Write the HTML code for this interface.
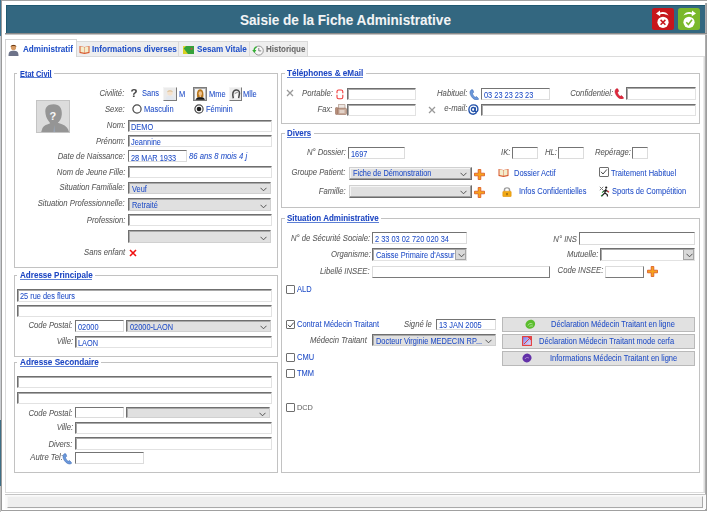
<!DOCTYPE html>
<html><head><meta charset="utf-8"><style>
html,body{margin:0;padding:0;}
body{filter:blur(0.3px);width:709px;height:512px;position:relative;overflow:hidden;background:#fff;font-family:"Liberation Sans",sans-serif;}
body>div,body>svg{position:absolute;}
.t{white-space:nowrap;-webkit-text-stroke:0.05px currentColor;}
.inp{box-sizing:border-box;border:1px solid;border-color:#6f6f6f #e2e2e2 #e2e2e2 #6f6f6f;box-shadow:inset 1px 1px 0 #a9a9a9;}
.inth{box-sizing:border-box;border:1px solid;border-color:#747474 #dcdcdc #dcdcdc #747474;}
.inrev{box-sizing:border-box;border:1px solid;border-color:#dcdcdc #7a7a7a #7a7a7a #dcdcdc;}
.sel{box-sizing:border-box;background:#e0e0e0;border:1px solid;border-color:#6f6f6f #d0d0d0 #d0d0d0 #6f6f6f;box-shadow:inset 1px 1px 0 #a9a9a9;}
.selr{box-sizing:border-box;background:#e0e0e0;border:1px solid;border-color:#d0d0d0 #6c6c6c #6c6c6c #d0d0d0;box-shadow:inset -1px -1px 0 #a0a0a0, inset 1px 1px 0 #f4f4f4;}
.ddb{box-sizing:border-box;background:#d9d9d9;border:1px solid #a5a5a5;}
.fs{border:1px solid #c2c2c2;}
.cb{width:10px;height:10px;box-sizing:border-box;border:1px solid #6e6e6e;border-radius:1px;background:#fff;}
</style></head><body>
<div style="left:0px;top:0px;width:1px;height:36px;background:#3d7390"></div>
<div style="left:0px;top:36px;width:1px;height:384px;background:#c9ccd0"></div>
<div style="left:0px;top:420px;width:1px;height:66px;background:#3f6f86"></div>
<div style="left:0px;top:486px;width:1px;height:26px;background:#bfbfbf"></div>
<div style="left:1px;top:0px;width:706px;height:1px;background:#a3a3a3"></div>
<div style="left:1px;top:0px;width:1px;height:511px;background:#9a9a9a"></div>
<div style="left:705px;top:3px;width:2px;height:508px;background:linear-gradient(90deg,#b4b4b4,#969696)"></div>
<div style="left:1px;top:510px;width:706px;height:1px;background:#a0a0a0"></div>
<div style="left:6px;top:5px;width:699px;height:29px;background:#336780;border-top:1px solid #1f5870;border-left:1px solid #1f5870;box-sizing:border-box"></div>
<div style="left:5px;top:33px;width:702px;height:1px;background:#8a8a8a"></div>
<div style="left:5px;top:34px;width:702px;height:1px;background:#c4c4c4"></div>
<div class="t" style="top:13.30px;font-size:14.42px;line-height:14.42px;color:#f2f4f5;transform:scaleX(0.9434);font-weight:bold;left:239.50px;transform-origin:left center;">Saisie de la Fiche Administrative</div>
<svg style="left:652px;top:8.4px" width="22" height="22" viewBox="0 0 22 22"><rect x="0" y="0" width="22" height="22" rx="2.5" fill="#c7161c"/>
<path d="M16.5 7.5 C15 4.2 11 3.3 8 4.6 L8 2.6 L4 5.6 L8.2 8.2 L8.1 6.4 C10.5 5.6 13.3 6 16.5 7.5 Z" fill="#fff"/>
<circle cx="11" cy="14.3" r="5.6" fill="#fff"/>
<path d="M8.6 11.9 L13.4 16.7 M13.4 11.9 L8.6 16.7" stroke="#c7161c" stroke-width="1.5"/></svg>
<svg style="left:678px;top:8.4px" width="22" height="22" viewBox="0 0 22 22"><rect x="0" y="0" width="22" height="22" rx="2.5" fill="#7ab82a"/>
<path d="M5.5 7.5 C7 4.2 11 3.3 14 4.6 L14 2.6 L18 5.6 L13.8 8.2 L13.9 6.4 C11.5 5.6 8.7 6 5.5 7.5 Z" fill="#fff"/>
<circle cx="11" cy="14.3" r="5.6" fill="#fff"/>
<path d="M8.3 14.2 L10.4 16.5 L14 11.8" fill="none" stroke="#7ab82a" stroke-width="1.5"/></svg>
<div style="left:5px;top:56px;width:700px;height:437px;border:1px solid #dcdcdc;box-shadow:inset -1px 0 0 #ececec;box-sizing:border-box;background:#fff"></div>
<div style="left:76px;top:41px;width:103px;height:16px;background:#eeeeee;border:1px solid #dadada;box-sizing:border-box"></div>
<div style="left:178px;top:41px;width:72px;height:16px;background:#eeeeee;border:1px solid #dadada;box-sizing:border-box"></div>
<div style="left:249px;top:41px;width:59px;height:16px;background:#eeeeee;border:1px solid #dadada;box-sizing:border-box"></div>
<div style="left:5px;top:39px;width:72px;height:18px;background:#fff;border:1px solid #d4d4d4;border-bottom:none;box-sizing:border-box"></div>
<svg style="left:8px;top:44px" width="11" height="12" viewBox="0 0 11 12"><ellipse cx="5.5" cy="3.5" rx="2.6" ry="2.8" fill="#d69a63"/>
<path d="M2.6 3 C2.6 0.4 8.4 0.4 8.4 3 C7.5 2 4 1.6 2.6 3Z" fill="#6b3a12"/>
<path d="M0.5 12 C0.5 7.5 2 6.8 5.5 6.8 C9 6.8 10.5 7.5 10.5 12 Z" fill="#6d7389"/></svg>
<div class="t" style="top:45.30px;font-size:8.91px;line-height:8.91px;color:#2150c8;transform:scaleX(0.9091);font-weight:bold;left:22.50px;transform-origin:left center;">Administratif</div>
<svg style="left:79px;top:45px" width="11" height="9" viewBox="0 0 11 9"><path d="M0.5 1 L5.5 2 L10.5 1 L10.5 8 L5.5 9 L0.5 8 Z" fill="#d7572a"/>
<path d="M1.5 1.5 L5.3 2.3 L5.3 7.8 L1.5 7 Z M5.7 2.3 L9.5 1.5 L9.5 7 L5.7 7.8 Z" fill="#f4edcc"/></svg>
<div class="t" style="top:45.30px;font-size:8.97px;line-height:8.97px;color:#2150c8;transform:scaleX(0.9091);font-weight:bold;left:92.20px;transform-origin:left center;">Informations diverses</div>
<svg style="left:183px;top:46px" width="11" height="8" viewBox="0 0 11 8"><rect x="0" y="0" width="11" height="8" fill="#36a23a"/><path d="M0 1.5 L5 8 L0 8Z" fill="#d9d020"/><path d="M0 0 L3 0 L0 3Z" fill="#e2d83a"/><circle cx="8.5" cy="2.8" r="1" fill="#c0504a"/></svg>
<div class="t" style="top:45.30px;font-size:8.91px;line-height:8.91px;color:#2150c8;transform:scaleX(0.9091);font-weight:bold;left:196.80px;transform-origin:left center;">Sesam Vitale</div>
<svg style="left:252px;top:45px" width="12" height="11" viewBox="0 0 12 11"><circle cx="6.8" cy="5.6" r="4.5" fill="#f6f6f6" stroke="#8a8a8a" stroke-width="0.9"/>
<path d="M6.8 3 L6.8 5.9 L9.2 5.9" fill="none" stroke="#666" stroke-width="0.8"/>
<path d="M4.5 1.2 C2.5 1.8 1.5 3.2 1.5 5 L0.2 5 L2.3 8 L4.4 5 L3 5 C3 3.8 3.6 3 4.8 2.6Z" fill="#35b035"/></svg>
<div class="t" style="top:45.30px;font-size:8.75px;line-height:8.75px;color:#6a6a6a;transform:scaleX(0.9091);font-weight:bold;left:265.60px;transform-origin:left center;">Historique</div>
<div class="fs" style="left:14px;top:73px;width:262px;height:193px"></div>
<div style="left:17.3px;top:72px;width:37px;height:3px;background:#fff"></div>
<div class="t" style="top:71.00px;font-size:8.14px;line-height:8.14px;color:#1d46c2;transform:scaleX(0.9091);font-weight:bold;left:19.80px;transform-origin:left center;">Etat Civil</div>
<div style="left:19.8px;top:77px;width:32px;height:1px;background:#5d80d6"></div>
<div style="left:36px;top:100px;width:34px;height:33px;background:#dcdcdc;border:1px solid #c4c4c4;box-sizing:border-box"></div>
<svg style="left:36px;top:100px" width="34" height="33" viewBox="0 0 34 33"><path d="M17.5 4.2 C12 4.2 9.2 7 9.3 11.5 C9.4 15 10.6 18.5 12.6 21 L14.2 23.3 C11 24.5 8 25.5 6.5 28 L5.2 32 L33 32 C32 28 30 25.5 26 24.2 L21.8 22.8 C23.5 21.5 25.5 19 25.8 14.5 C26.2 8 23.5 4.2 17.5 4.2Z" fill="#959595"/>
<path d="M18.3 25 L17.4 32 L19.2 32 Z" fill="#98a4b4"/>
<text x="16.8" y="19.6" font-family="Liberation Sans" font-weight="bold" font-size="11" fill="#f8f8f8" text-anchor="middle">?</text></svg>
<div class="t" style="top:89.10px;font-size:8.47px;line-height:8.47px;color:#575757;transform:scaleX(0.9091);font-style:italic;right:584.40px;text-align:right;transform-origin:right center;">Civilité:</div>
<div class="t" style="top:88.20px;font-size:11.50px;line-height:11.50px;color:#454545;transform:scaleX(1.0000);font-weight:bold;left:130.60px;transform-origin:left center;">?</div>
<div class="t" style="top:90.30px;font-size:8.25px;line-height:8.25px;color:#1f4cc6;transform:scaleX(0.9091);left:141.50px;transform-origin:left center;">Sans</div>
<div style="left:163px;top:87px;width:14px;height:13.5px;background:#ebebeb;border:1px solid;border-color:#f4f4f4 #7a7a7a #7a7a7a #f4f4f4;box-sizing:border-box"></div>
<svg style="left:164px;top:88px" width="12" height="12" viewBox="0 0 12 12"><path d="M1.5 12 C1.8 8.6 3.5 7.8 6 7.8 C8.5 7.8 10.2 8.6 10.5 12Z" fill="#e3e8ef"/><circle cx="6" cy="4.8" r="2.7" fill="#f6e2cc"/><path d="M3.2 4.5 C3 1.5 9 1.5 8.8 4.5 C8 3.3 4 3.3 3.2 4.5Z" fill="#d9bf96"/></svg>
<div class="t" style="top:90.50px;font-size:8.25px;line-height:8.25px;color:#1f4cc6;transform:scaleX(0.9091);left:178.50px;transform-origin:left center;">M</div>
<div style="left:193px;top:87px;width:14px;height:13.5px;background:#f4f4f4;border:1px solid #7c7c7c;box-shadow:inset 1px 1px 0 #a8a8a8, inset -1px -1px 0 #b8b8b8;box-sizing:border-box"></div>
<svg style="left:194px;top:88px" width="12" height="12" viewBox="0 0 12 12"><path d="M3.2 9.5 C2.6 6 2.8 1.3 6.2 1.3 C9.4 1.3 9.8 6 9.2 9.5Z" fill="#b8781f"/><ellipse cx="6.3" cy="5.6" rx="1.7" ry="2.4" fill="#f2c590"/><path d="M5.6 7.5 L7 7.5 L7 9.5 L5.6 9.5Z" fill="#f2c590"/><path d="M1.8 11.8 C2 9.8 3.8 9.2 6.3 9.2 C8.8 9.2 10.6 9.8 10.8 11.8Z" fill="#161616"/></svg>
<div class="t" style="top:90.50px;font-size:8.25px;line-height:8.25px;color:#1f4cc6;transform:scaleX(0.9091);left:208.50px;transform-origin:left center;">Mme</div>
<div style="left:228.5px;top:87px;width:13.5px;height:13.5px;background:#ececec;border:1px solid;border-color:#f4f4f4 #7a7a7a #7a7a7a #f4f4f4;box-sizing:border-box"></div>
<svg style="left:229.5px;top:88px" width="12" height="12" viewBox="0 0 12 12"><path d="M3.3 10.2 C2.2 6.5 2.6 2.2 6.2 2 C9.3 1.9 10 4.5 9.2 7.2 L8.6 10.2" fill="none" stroke="#4a4a4a" stroke-width="1.5"/><path d="M4.6 10.2 L4.8 5.5 L7.8 4.2 L7.6 10.2Z" fill="#fafafa"/><path d="M4.8 5.5 L7.8 4.2" stroke="#6a6a6a" stroke-width="0.8"/></svg>
<div class="t" style="top:90.50px;font-size:8.25px;line-height:8.25px;color:#1f4cc6;transform:scaleX(0.9091);left:243.00px;transform-origin:left center;">Mlle</div>
<div class="t" style="top:104.60px;font-size:8.47px;line-height:8.47px;color:#575757;transform:scaleX(0.9091);font-style:italic;right:584.40px;text-align:right;transform-origin:right center;">Sexe:</div>
<svg style="left:131.5px;top:103.5px" width="10" height="10" viewBox="0 0 10 10"><circle cx="5" cy="5" r="4.1" fill="#fff" stroke="#4a4a4a" stroke-width="1.2"/></svg>
<div class="t" style="top:105.90px;font-size:8.25px;line-height:8.25px;color:#1f4cc6;transform:scaleX(0.9091);left:143.60px;transform-origin:left center;">Masculin</div>
<svg style="left:193.5px;top:103.5px" width="10" height="10" viewBox="0 0 10 10"><circle cx="5" cy="5" r="4.1" fill="#fff" stroke="#4a4a4a" stroke-width="1.2"/><circle cx="5" cy="5" r="2.3" fill="#1a1a1a"/></svg>
<div class="t" style="top:105.90px;font-size:8.25px;line-height:8.25px;color:#1f4cc6;transform:scaleX(0.9091);left:205.80px;transform-origin:left center;">Féminin</div>
<div class="t" style="top:120.70px;font-size:8.47px;line-height:8.47px;color:#575757;transform:scaleX(0.9091);font-style:italic;right:584.00px;text-align:right;transform-origin:right center;">Nom:</div>
<div class="inp" style="left:128px;top:120px;width:144px;height:12px;background:#fff"></div>
<div class="t" style="top:123.80px;font-size:8.14px;line-height:8.14px;color:#1f4cc6;transform:scaleX(0.9091);left:131.00px;transform-origin:left center;">DEMO</div>
<div class="t" style="top:136.50px;font-size:8.47px;line-height:8.47px;color:#575757;transform:scaleX(0.9091);font-style:italic;right:584.00px;text-align:right;transform-origin:right center;">Prénom:</div>
<div class="inp" style="left:128px;top:135px;width:144px;height:12px;background:#fff"></div>
<div class="t" style="top:139.00px;font-size:8.14px;line-height:8.14px;color:#1f4cc6;transform:scaleX(0.9091);left:131.00px;transform-origin:left center;">Jeannine</div>
<div class="t" style="top:151.60px;font-size:8.47px;line-height:8.47px;color:#575757;transform:scaleX(0.9091);font-style:italic;right:584.00px;text-align:right;transform-origin:right center;">Date de Naissance:</div>
<div class="inth" style="left:128px;top:150px;width:59px;height:12px;background:#fff"></div>
<div class="t" style="top:154.50px;font-size:8.14px;line-height:8.14px;color:#1f4cc6;transform:scaleX(0.9091);left:131.00px;transform-origin:left center;">28 MAR 1933</div>
<div class="t" style="top:152.00px;font-size:8.47px;line-height:8.47px;color:#1f4cc6;transform:scaleX(0.9091);font-style:italic;left:188.60px;transform-origin:left center;">86 ans 8 mois 4 j</div>
<div class="t" style="top:167.80px;font-size:8.47px;line-height:8.47px;color:#575757;transform:scaleX(0.9091);font-style:italic;right:584.00px;text-align:right;transform-origin:right center;">Nom de Jeune Fille:</div>
<div class="inp" style="left:128px;top:166px;width:144px;height:12px;background:#fff"></div>
<div class="t" style="top:183.00px;font-size:8.47px;line-height:8.47px;color:#575757;transform:scaleX(0.9091);font-style:italic;right:584.00px;text-align:right;transform-origin:right center;">Situation Familiale:</div>
<div class="sel" style="left:128px;top:182px;width:143px;height:12px"></div>
<svg style="left:260.0px;top:187.0px" width="7" height="5" viewBox="0 0 7 5"><path d="M0.5 0.8 L3.5 3.8 L6.5 0.8" fill="none" stroke="#444" stroke-width="0.9"/></svg>
<div class="t" style="top:185.60px;font-size:8.14px;line-height:8.14px;color:#1f4cc6;transform:scaleX(0.9091);left:132.00px;transform-origin:left center;">Veuf</div>
<div class="t" style="top:199.40px;font-size:8.47px;line-height:8.47px;color:#575757;transform:scaleX(0.9091);font-style:italic;right:584.00px;text-align:right;transform-origin:right center;">Situation Professionnelle:</div>
<div class="sel" style="left:128px;top:198px;width:143px;height:13px"></div>
<svg style="left:260.0px;top:203.5px" width="7" height="5" viewBox="0 0 7 5"><path d="M0.5 0.8 L3.5 3.8 L6.5 0.8" fill="none" stroke="#444" stroke-width="0.9"/></svg>
<div class="t" style="top:202.10px;font-size:8.14px;line-height:8.14px;color:#1f4cc6;transform:scaleX(0.9091);left:132.00px;transform-origin:left center;">Retraité</div>
<div class="t" style="top:215.90px;font-size:8.47px;line-height:8.47px;color:#575757;transform:scaleX(0.9091);font-style:italic;right:584.00px;text-align:right;transform-origin:right center;">Profession:</div>
<div class="inp" style="left:128px;top:214px;width:144px;height:12px;background:#fff"></div>
<div class="sel" style="left:128px;top:230px;width:143px;height:13px"></div>
<svg style="left:260.0px;top:235.5px" width="7" height="5" viewBox="0 0 7 5"><path d="M0.5 0.8 L3.5 3.8 L6.5 0.8" fill="none" stroke="#444" stroke-width="0.9"/></svg>
<div class="t" style="top:247.80px;font-size:8.47px;line-height:8.47px;color:#575757;transform:scaleX(0.9091);font-style:italic;right:583.60px;text-align:right;transform-origin:right center;">Sans enfant</div>
<svg style="left:129px;top:249px" width="8" height="8" viewBox="0 0 8 8"><path d="M1 1 L7 7 M7 1 L1 7" stroke="#f01010" stroke-width="1.6"/></svg>
<div class="fs" style="left:14px;top:275px;width:262px;height:80px"></div>
<div style="left:17.3px;top:274px;width:77.7px;height:3px;background:#fff"></div>
<div class="t" style="top:271.10px;font-size:8.88px;line-height:8.88px;color:#1d46c2;transform:scaleX(0.9091);font-weight:bold;left:19.80px;transform-origin:left center;">Adresse Principale</div>
<div style="left:19.8px;top:279px;width:72.7px;height:1px;background:#5d80d6"></div>
<div class="inp" style="left:17px;top:289px;width:255px;height:13px;background:#fff"></div>
<div class="t" style="top:293.10px;font-size:8.14px;line-height:8.14px;color:#1f4cc6;transform:scaleX(0.9091);left:20.00px;transform-origin:left center;">25 rue des fleurs</div>
<div class="inp" style="left:17px;top:305px;width:255px;height:12px;background:#fff"></div>
<div class="t" style="top:321.00px;font-size:8.47px;line-height:8.47px;color:#575757;transform:scaleX(0.9091);font-style:italic;right:636.30px;text-align:right;transform-origin:right center;">Code Postal:</div>
<div class="inth" style="left:75px;top:320px;width:49px;height:12px;background:#fff"></div>
<div class="t" style="top:323.60px;font-size:8.14px;line-height:8.14px;color:#1f4cc6;transform:scaleX(0.9091);left:78.00px;transform-origin:left center;">02000</div>
<div class="sel" style="left:126px;top:320px;width:145px;height:12px"></div>
<svg style="left:260.0px;top:325.0px" width="7" height="5" viewBox="0 0 7 5"><path d="M0.5 0.8 L3.5 3.8 L6.5 0.8" fill="none" stroke="#444" stroke-width="0.9"/></svg>
<div class="t" style="top:323.60px;font-size:8.14px;line-height:8.14px;color:#1f4cc6;transform:scaleX(0.9091);left:130.00px;transform-origin:left center;">02000-LAON</div>
<div class="t" style="top:337.30px;font-size:8.47px;line-height:8.47px;color:#575757;transform:scaleX(0.9091);font-style:italic;right:636.30px;text-align:right;transform-origin:right center;">Ville:</div>
<div class="inp" style="left:75px;top:336px;width:197px;height:12px;background:#fff"></div>
<div class="t" style="top:339.60px;font-size:8.14px;line-height:8.14px;color:#1f4cc6;transform:scaleX(0.9091);left:78.00px;transform-origin:left center;">LAON</div>
<div class="fs" style="left:14px;top:362px;width:262px;height:109px"></div>
<div style="left:17.0px;top:361px;width:83.8px;height:3px;background:#fff"></div>
<div class="t" style="top:358.10px;font-size:9.02px;line-height:9.02px;color:#1d46c2;transform:scaleX(0.9091);font-weight:bold;left:19.50px;transform-origin:left center;">Adresse Secondaire</div>
<div style="left:19.5px;top:366px;width:78.8px;height:1px;background:#5d80d6"></div>
<div class="inp" style="left:17px;top:376px;width:255px;height:12px;background:#fff"></div>
<div class="inp" style="left:17px;top:392px;width:255px;height:12px;background:#fff"></div>
<div class="t" style="top:408.70px;font-size:8.47px;line-height:8.47px;color:#575757;transform:scaleX(0.9091);font-style:italic;right:636.30px;text-align:right;transform-origin:right center;">Code Postal:</div>
<div class="inth" style="left:75px;top:407px;width:49px;height:11px;background:#fff"></div>
<div class="sel" style="left:126px;top:407px;width:144px;height:11px"></div>
<svg style="left:259.0px;top:411.5px" width="7" height="5" viewBox="0 0 7 5"><path d="M0.5 0.8 L3.5 3.8 L6.5 0.8" fill="none" stroke="#444" stroke-width="0.9"/></svg>
<div class="t" style="top:423.20px;font-size:8.47px;line-height:8.47px;color:#575757;transform:scaleX(0.9091);font-style:italic;right:636.30px;text-align:right;transform-origin:right center;">Ville:</div>
<div class="inp" style="left:75px;top:422px;width:197px;height:12px;background:#fff"></div>
<div class="t" style="top:439.60px;font-size:8.47px;line-height:8.47px;color:#575757;transform:scaleX(0.9091);font-style:italic;right:636.30px;text-align:right;transform-origin:right center;">Divers:</div>
<div class="inp" style="left:75px;top:437px;width:197px;height:13px;background:#fff"></div>
<div class="t" style="top:453.20px;font-size:8.47px;line-height:8.47px;color:#575757;transform:scaleX(0.9091);font-style:italic;right:646.50px;text-align:right;transform-origin:right center;">Autre Tel:</div>
<svg style="left:62px;top:453px" width="10" height="12" viewBox="0 0 10 12"><path d="M2.4 0.8 C0.6 2 0.5 4.8 2.6 7.8 C4.6 10.6 7.3 11.6 9.3 10.6 L9.4 9.6 L7.6 7.6 L6.2 8.3 C4.9 7.5 3.9 5.9 3.5 4.4 L4.7 3.3 L3.8 0.8 Z" fill="#6b98da" stroke="#3f6db9" stroke-width="0.6"/></svg>
<div class="inth" style="left:75px;top:452px;width:69px;height:12px;background:#fff"></div>
<div class="fs" style="left:281px;top:73px;width:417px;height:49px"></div>
<div style="left:284.5px;top:72px;width:81.3px;height:3px;background:#fff"></div>
<div class="t" style="top:69.10px;font-size:8.99px;line-height:8.99px;color:#1d46c2;transform:scaleX(0.9091);font-weight:bold;left:287.00px;transform-origin:left center;">Téléphones &amp; eMail</div>
<div style="left:287px;top:77px;width:76.3px;height:1px;background:#5d80d6"></div>
<svg style="left:285.8px;top:89.2px" width="8" height="8" viewBox="0 0 8 8"><path d="M1 1 L7 7 M7 1 L1 7" stroke="#999" stroke-width="1.3"/></svg>
<div class="t" style="top:89.00px;font-size:8.47px;line-height:8.47px;color:#575757;transform:scaleX(0.9091);font-style:italic;right:376.40px;text-align:right;transform-origin:right center;">Portable:</div>
<svg style="left:336.3px;top:88.5px" width="8" height="11" viewBox="0 0 8 11"><path d="M1 4.3 L1 2.6 C1 1.5 1.6 1 2.6 1 L5.2 1 C6.2 1 6.8 1.5 6.8 2.6 L6.8 4.3 M1 5.8 L1 8.2 C1 9.3 1.6 9.8 2.6 9.8 L5.2 9.8 C6.2 9.8 6.8 9.3 6.8 8.2 L6.8 5.8" fill="none" stroke="#f03c3c" stroke-width="1.1"/></svg>
<div class="inp" style="left:347px;top:88px;width:69px;height:12px;background:#fff"></div>
<div class="t" style="top:104.50px;font-size:8.47px;line-height:8.47px;color:#575757;transform:scaleX(0.9091);font-style:italic;right:376.40px;text-align:right;transform-origin:right center;">Fax:</div>
<svg style="left:334.5px;top:104px" width="12" height="11" viewBox="0 0 12 11"><rect x="3.5" y="0.7" width="6.5" height="4" fill="#ece6e2" stroke="#a08474" stroke-width="0.6"/><rect x="2.5" y="4.2" width="9" height="6.3" rx="1" fill="#c7aa9a" stroke="#9a6e5a" stroke-width="0.6"/><rect x="0.4" y="3.5" width="2.6" height="7" rx="1" fill="#b58e7a" stroke="#8d5f4c" stroke-width="0.5"/><rect x="4.5" y="6" width="5" height="3" fill="#e2d2c8"/></svg>
<div class="inp" style="left:347px;top:104px;width:69px;height:12px;background:#fff"></div>
<svg style="left:427.5px;top:105.5px" width="8" height="8" viewBox="0 0 8 8"><path d="M1 1 L7 7 M7 1 L1 7" stroke="#999" stroke-width="1.3"/></svg>
<div class="t" style="top:88.80px;font-size:8.47px;line-height:8.47px;color:#575757;transform:scaleX(0.9091);font-style:italic;right:241.10px;text-align:right;transform-origin:right center;">Habituel:</div>
<svg style="left:469px;top:88.5px" width="10" height="11" viewBox="0 0 10 11"><path d="M2.4 0.8 C0.6 2 0.5 4.8 2.6 7.8 C4.6 10.6 7.3 11.6 9.3 10.6 L9.4 9.6 L7.6 7.6 L6.2 8.3 C4.9 7.5 3.9 5.9 3.5 4.4 L4.7 3.3 L3.8 0.8 Z" fill="#6b98da" stroke="#3f6db9" stroke-width="0.6"/></svg>
<div class="inth" style="left:481px;top:88px;width:69px;height:12px;background:#fff"></div>
<div class="t" style="top:91.60px;font-size:8.14px;line-height:8.14px;color:#1f4cc6;transform:scaleX(0.9091);left:484.00px;transform-origin:left center;">03 23 23 23 23</div>
<div class="t" style="top:104.00px;font-size:8.47px;line-height:8.47px;color:#575757;transform:scaleX(0.9091);font-style:italic;right:241.80px;text-align:right;transform-origin:right center;">e-mail:</div>
<svg style="left:467.5px;top:104px" width="11" height="11" viewBox="0 0 11 11"><path d="M8.6 8.6 C7.5 9.7 6.3 10.2 5.3 10.2 C2.6 10.2 0.9 8.1 0.9 5.5 C0.9 2.7 3 0.9 5.5 0.9 C8.1 0.9 9.9 2.7 9.9 5.1 C9.9 6.8 9.1 7.8 8.1 7.8 C7.3 7.8 7 7.2 7.1 6.4 L7.5 3.4" fill="none" stroke="#2150a8" stroke-width="1.35"/><ellipse cx="5.2" cy="5.5" rx="1.8" ry="2" fill="none" stroke="#2150a8" stroke-width="1.3"/></svg>
<div class="inp" style="left:481px;top:104px;width:215px;height:12px;background:#fff"></div>
<div class="t" style="top:89.00px;font-size:8.47px;line-height:8.47px;color:#575757;transform:scaleX(0.9091);font-style:italic;right:95.70px;text-align:right;transform-origin:right center;">Confidentiel:</div>
<svg style="left:614px;top:88.2px" width="10" height="11" viewBox="0 0 10 11"><path d="M2.4 0.8 C0.6 2 0.5 4.8 2.6 7.8 C4.6 10.6 7.3 11.6 9.3 10.6 L9.4 9.6 L7.6 7.6 L6.2 8.3 C4.9 7.5 3.9 5.9 3.5 4.4 L4.7 3.3 L3.8 0.8 Z" fill="#e0283c" stroke="#b81c30" stroke-width="0.5"/></svg>
<div class="inp" style="left:626px;top:87px;width:70px;height:13px;background:#fff"></div>
<div class="fs" style="left:281px;top:133px;width:417px;height:73px"></div>
<div style="left:284.8px;top:132px;width:29.2px;height:3px;background:#fff"></div>
<div class="t" style="top:129.10px;font-size:8.69px;line-height:8.69px;color:#1d46c2;transform:scaleX(0.9091);font-weight:bold;left:287.30px;transform-origin:left center;">Divers</div>
<div style="left:287.3px;top:137px;width:24.2px;height:1px;background:#5d80d6"></div>
<div class="t" style="top:147.70px;font-size:8.47px;line-height:8.47px;color:#575757;transform:scaleX(0.9091);font-style:italic;right:363.40px;text-align:right;transform-origin:right center;">N° Dossier:</div>
<div class="inth" style="left:348px;top:147px;width:57px;height:12px;background:#fff"></div>
<div class="t" style="top:150.60px;font-size:8.14px;line-height:8.14px;color:#1f4cc6;transform:scaleX(0.9091);left:351.00px;transform-origin:left center;">1697</div>
<div class="t" style="top:148.00px;font-size:8.47px;line-height:8.47px;color:#575757;transform:scaleX(0.9091);font-style:italic;left:500.80px;transform-origin:left center;">IK:</div>
<div class="inth" style="left:512px;top:147px;width:26px;height:12px;background:#fff"></div>
<div class="t" style="top:148.00px;font-size:8.47px;line-height:8.47px;color:#575757;transform:scaleX(0.9091);font-style:italic;left:545.00px;transform-origin:left center;">HL:</div>
<div class="inth" style="left:558px;top:147px;width:26px;height:12px;background:#fff"></div>
<div class="t" style="top:148.00px;font-size:8.47px;line-height:8.47px;color:#575757;transform:scaleX(0.9091);font-style:italic;left:595.00px;transform-origin:left center;">Repérage:</div>
<div class="inth" style="left:632px;top:147px;width:16px;height:12px;background:#fff"></div>
<div class="t" style="top:168.20px;font-size:8.47px;line-height:8.47px;color:#575757;transform:scaleX(0.9091);font-style:italic;right:363.40px;text-align:right;transform-origin:right center;">Groupe Patient:</div>
<div class="selr" style="left:349px;top:167px;width:123px;height:13px"></div>
<svg style="left:460.0px;top:172.0px" width="7" height="5" viewBox="0 0 7 5"><path d="M0.5 0.8 L3.5 3.8 L6.5 0.8" fill="none" stroke="#444" stroke-width="0.9"/></svg>
<div class="t" style="top:170.10px;font-size:8.14px;line-height:8.14px;color:#1f4cc6;transform:scaleX(0.9091);left:353.00px;transform-origin:left center;">Fiche de Démonstration</div>
<svg style="left:473.5px;top:168.5px" width="11" height="11" viewBox="0 0 11 11"><path d="M4.2 0.5 L6.8 0.5 L6.8 4.2 L10.5 4.2 L10.5 6.8 L6.8 6.8 L6.8 10.5 L4.2 10.5 L4.2 6.8 L0.5 6.8 L0.5 4.2 L4.2 4.2Z" fill="#f7a21b" stroke="#d9531e" stroke-width="0.8"/></svg>
<svg style="left:497.5px;top:168px" width="11" height="9" viewBox="0 0 11 9"><path d="M0.5 1 L5.5 2 L10.5 1 L10.5 8 L5.5 9 L0.5 8 Z" fill="#d7572a"/>
<path d="M1.5 1.5 L5.3 2.3 L5.3 7.8 L1.5 7 Z M5.7 2.3 L9.5 1.5 L9.5 7 L5.7 7.8 Z" fill="#f4edcc"/></svg>
<div class="t" style="top:169.50px;font-size:8.25px;line-height:8.25px;color:#1f4cc6;transform:scaleX(0.9091);left:514.00px;transform-origin:left center;">Dossier Actif</div>
<div class="cb" style="left:599px;top:167px;width:10px;height:10px"></div>
<svg style="left:599.8px;top:167.8px" width="8" height="8" viewBox="0 0 8 8"><path d="M1 3.8 L3 6 L6.8 1.5" fill="none" stroke="#4a4a4a" stroke-width="1"/></svg>
<div class="t" style="top:169.50px;font-size:8.25px;line-height:8.25px;color:#1f4cc6;transform:scaleX(0.9091);left:610.50px;transform-origin:left center;">Traitement Habituel</div>
<div class="t" style="top:186.80px;font-size:8.47px;line-height:8.47px;color:#575757;transform:scaleX(0.9091);font-style:italic;right:363.40px;text-align:right;transform-origin:right center;">Famille:</div>
<div class="selr" style="left:349px;top:185px;width:123px;height:13px"></div>
<svg style="left:460.0px;top:190.0px" width="7" height="5" viewBox="0 0 7 5"><path d="M0.5 0.8 L3.5 3.8 L6.5 0.8" fill="none" stroke="#444" stroke-width="0.9"/></svg>
<svg style="left:473.5px;top:186.5px" width="11" height="11" viewBox="0 0 11 11"><path d="M4.2 0.5 L6.8 0.5 L6.8 4.2 L10.5 4.2 L10.5 6.8 L6.8 6.8 L6.8 10.5 L4.2 10.5 L4.2 6.8 L0.5 6.8 L0.5 4.2 L4.2 4.2Z" fill="#f7a21b" stroke="#d9531e" stroke-width="0.8"/></svg>
<svg style="left:502px;top:186px" width="10" height="11" viewBox="0 0 10 11"><path d="M1.8 5.5 L1.8 3.6 C1.8 0.4 8.2 0.4 8.2 3.6 L8.2 5.5 L6.8 5.5 L6.8 3.8 C6.8 2 3.2 2 3.2 3.8 L3.2 5.5Z" fill="#9a9a9a"/><rect x="0.8" y="5.2" width="8.4" height="5.6" rx="0.8" fill="#f2a914" stroke="#d98a0a" stroke-width="0.5"/><rect x="4.5" y="7" width="1" height="2.2" fill="#6a4a10"/></svg>
<div class="t" style="top:188.00px;font-size:8.25px;line-height:8.25px;color:#1f4cc6;transform:scaleX(0.9091);left:518.70px;transform-origin:left center;">Infos Confidentielles</div>
<svg style="left:599px;top:186px" width="12" height="11" viewBox="0 0 12 11"><path d="M0.8 0.8 L4.2 4.2 M4.2 0.8 L0.8 4.2" stroke="#7a7a7a" stroke-width="1"/><circle cx="7.2" cy="1.6" r="1.1" fill="#1a1a1a"/><path d="M7 3 L5.8 7 L2.5 10.2 M5.8 7 L8.2 8.5 L8.5 10.5 M6.8 4.2 L4 5.5 M6.8 4.2 L9.5 6" stroke="#1a1a1a" stroke-width="1.2" fill="none"/><path d="M8.4 4.8 L10 6.2" stroke="#e04848" stroke-width="1.2"/><path d="M4.5 5.3 L3 6.6 M3.2 9.2 L2 10" stroke="#2a9a3a" stroke-width="1.1"/></svg>
<div class="t" style="top:188.00px;font-size:8.25px;line-height:8.25px;color:#1f4cc6;transform:scaleX(0.9091);left:612.00px;transform-origin:left center;">Sports de Compétition</div>
<div class="fs" style="left:281px;top:218px;width:417px;height:253px"></div>
<div style="left:284.8px;top:217px;width:96.5px;height:3px;background:#fff"></div>
<div class="t" style="top:214.10px;font-size:8.80px;line-height:8.80px;color:#1d46c2;transform:scaleX(0.9091);font-weight:bold;left:287.30px;transform-origin:left center;">Situation Administrative</div>
<div style="left:287.3px;top:222px;width:91.5px;height:1px;background:#5d80d6"></div>
<div class="t" style="top:233.70px;font-size:8.47px;line-height:8.47px;color:#575757;transform:scaleX(0.9091);font-style:italic;right:338.50px;text-align:right;transform-origin:right center;">N° de Sécurité Sociale:</div>
<div class="inth" style="left:372px;top:232px;width:95px;height:12px;background:#fff"></div>
<div class="t" style="top:235.60px;font-size:8.14px;line-height:8.14px;color:#1f4cc6;transform:scaleX(0.9091);left:375.00px;transform-origin:left center;">2 33 03 02 720 020 34</div>
<div class="t" style="top:235.20px;font-size:8.47px;line-height:8.47px;color:#575757;transform:scaleX(0.9091);font-style:italic;right:132.50px;text-align:right;transform-origin:right center;">N° INS</div>
<div class="inth" style="left:579px;top:232px;width:116px;height:13px;background:#fff"></div>
<div class="t" style="top:250.10px;font-size:8.47px;line-height:8.47px;color:#575757;transform:scaleX(0.9091);font-style:italic;right:338.50px;text-align:right;transform-origin:right center;">Organisme:</div>
<div class="inp" style="left:372px;top:248px;width:95px;height:13px;background:#fff"></div>
<div class="ddb" style="left:455px;top:249px;width:11px;height:11px"></div>
<svg style="left:457.5px;top:253.0px" width="7" height="5" viewBox="0 0 7 5"><path d="M0.5 0.8 L3.5 3.8 L6.5 0.8" fill="none" stroke="#444" stroke-width="0.9"/></svg>
<div class="t" style="top:252.10px;font-size:8.14px;line-height:8.14px;color:#1f4cc6;transform:scaleX(0.9091);left:376.00px;transform-origin:left center;">Caisse Primaire d&#x27;Assur</div>
<div class="t" style="top:249.50px;font-size:8.47px;line-height:8.47px;color:#575757;transform:scaleX(0.9091);font-style:italic;right:110.30px;text-align:right;transform-origin:right center;">Mutuelle:</div>
<div class="inp" style="left:600px;top:248px;width:95px;height:13px;background:#fff"></div>
<div class="ddb" style="left:683px;top:249px;width:11px;height:11px"></div>
<svg style="left:685.5px;top:253.0px" width="7" height="5" viewBox="0 0 7 5"><path d="M0.5 0.8 L3.5 3.8 L6.5 0.8" fill="none" stroke="#444" stroke-width="0.9"/></svg>
<div class="t" style="top:266.90px;font-size:8.47px;line-height:8.47px;color:#575757;transform:scaleX(0.9091);font-style:italic;right:339.50px;text-align:right;transform-origin:right center;">Libellé INSEE:</div>
<div class="inrev" style="left:372px;top:266px;width:178px;height:12px;background:#fff"></div>
<div class="t" style="top:266.00px;font-size:8.47px;line-height:8.47px;color:#575757;transform:scaleX(0.9091);font-style:italic;right:105.30px;text-align:right;transform-origin:right center;">Code INSEE:</div>
<div class="inrev" style="left:605px;top:266px;width:39px;height:12px;background:#fff"></div>
<svg style="left:646.5px;top:266px" width="11" height="11" viewBox="0 0 11 11"><path d="M4.2 0.5 L6.8 0.5 L6.8 4.2 L10.5 4.2 L10.5 6.8 L6.8 6.8 L6.8 10.5 L4.2 10.5 L4.2 6.8 L0.5 6.8 L0.5 4.2 L4.2 4.2Z" fill="#f7a21b" stroke="#d9531e" stroke-width="0.8"/></svg>
<div class="cb" style="left:286px;top:285px;width:9px;height:9px"></div>
<div class="t" style="top:286.30px;font-size:8.25px;line-height:8.25px;color:#1f4cc6;transform:scaleX(0.9091);left:297.20px;transform-origin:left center;">ALD</div>
<div class="cb" style="left:286px;top:320px;width:9px;height:9px"></div>
<svg style="left:286.8px;top:320.8px" width="8" height="8" viewBox="0 0 8 8"><path d="M1 3.8 L3 6 L6.8 1.5" fill="none" stroke="#4a4a4a" stroke-width="1"/></svg>
<div class="t" style="top:321.00px;font-size:8.25px;line-height:8.25px;color:#1f4cc6;transform:scaleX(0.9091);left:297.20px;transform-origin:left center;">Contrat Médecin Traitant</div>
<div class="t" style="top:320.00px;font-size:8.47px;line-height:8.47px;color:#575757;transform:scaleX(0.9091);font-style:italic;left:403.70px;transform-origin:left center;">Signé le</div>
<div class="inth" style="left:436px;top:319px;width:60px;height:11px;background:#fff"></div>
<div class="t" style="top:322.10px;font-size:8.14px;line-height:8.14px;color:#1f4cc6;transform:scaleX(0.9091);left:439.00px;transform-origin:left center;">13 JAN 2005</div>
<div class="t" style="top:336.40px;font-size:8.47px;line-height:8.47px;color:#575757;transform:scaleX(0.9091);font-style:italic;left:310.00px;transform-origin:left center;">Médecin Traitant</div>
<div class="sel" style="left:372px;top:334px;width:124px;height:12px"></div>
<svg style="left:485.0px;top:339.0px" width="7" height="5" viewBox="0 0 7 5"><path d="M0.5 0.8 L3.5 3.8 L6.5 0.8" fill="none" stroke="#444" stroke-width="0.9"/></svg>
<div class="t" style="top:337.60px;font-size:8.14px;line-height:8.14px;color:#1f4cc6;transform:scaleX(0.9091);left:376.00px;transform-origin:left center;">Docteur Virginie MEDECIN RP...</div>
<div class="cb" style="left:286px;top:352.5px;width:9px;height:9px"></div>
<div class="t" style="top:353.80px;font-size:8.25px;line-height:8.25px;color:#1f4cc6;transform:scaleX(0.9091);left:297.20px;transform-origin:left center;">CMU</div>
<div class="cb" style="left:286px;top:369px;width:9px;height:9px"></div>
<div class="t" style="top:370.30px;font-size:8.25px;line-height:8.25px;color:#1f4cc6;transform:scaleX(0.9091);left:297.20px;transform-origin:left center;">TMM</div>
<div class="cb" style="left:286px;top:402.5px;width:9px;height:9px"></div>
<div class="t" style="top:403.80px;font-size:8.09px;line-height:8.09px;color:#666;transform:scaleX(0.9091);left:297.20px;transform-origin:left center;">DCD</div>
<div style="left:502px;top:317px;width:193px;height:15px;background:#e1e1e1;border:1px solid #b9b9b9;box-sizing:border-box"></div>
<div class="t" style="top:320.60px;font-size:8.25px;line-height:8.25px;color:#1f4cc6;transform:scaleX(0.9091);left:551.20px;transform-origin:left center;">Déclaration Médecin Traitant en ligne</div>
<div style="left:502px;top:334px;width:193px;height:15px;background:#e1e1e1;border:1px solid #b9b9b9;box-sizing:border-box"></div>
<div class="t" style="top:337.60px;font-size:8.25px;line-height:8.25px;color:#1f4cc6;transform:scaleX(0.9091);left:539.40px;transform-origin:left center;">Déclaration Médecin Traitant mode cerfa</div>
<div style="left:502px;top:351px;width:193px;height:15px;background:#e1e1e1;border:1px solid #b9b9b9;box-sizing:border-box"></div>
<div class="t" style="top:354.60px;font-size:8.25px;line-height:8.25px;color:#1f4cc6;transform:scaleX(0.9091);left:550.20px;transform-origin:left center;">Informations Médecin Traitant en ligne</div>
<svg style="left:524.5px;top:319px" width="11" height="11" viewBox="0 0 11 11"><ellipse cx="5.3" cy="5.3" rx="4.9" ry="4.4" transform="rotate(-30 5.3 5.3)" fill="#5bbd2e"/><path d="M3 6.5 C3.5 4.5 6 4 7.5 5 M4.5 7.5 C5.5 6.8 6.5 6.8 7.8 7" stroke="#b8e6a0" stroke-width="0.9" fill="none"/></svg>
<svg style="left:522px;top:336px" width="10" height="10.5" viewBox="0 0 10 10.5"><defs><linearGradient id="g2" x1="0" y1="0" x2="1" y2="1"><stop offset="0" stop-color="#7a78ee"/><stop offset="1" stop-color="#e8e8ff"/></linearGradient></defs><rect x="0.6" y="0.6" width="8.8" height="8.8" fill="url(#g2)" stroke="#e43b3b" stroke-width="1.1"/><path d="M2 8 L8.2 1.8 M6 1.5 L8.6 1.5 L8.6 4" stroke="#e43b3b" stroke-width="1" fill="none"/></svg>
<svg style="left:521.5px;top:352.5px" width="10" height="10" viewBox="0 0 10 10"><ellipse cx="5" cy="5" rx="4.6" ry="4.3" transform="rotate(-30 5 5)" fill="#6331a8"/><path d="M3 6 C3.5 4.5 5.5 4 6.8 5" stroke="#b49ad8" stroke-width="0.9" fill="none"/></svg>
<div style="left:5px;top:494px;width:701px;height:15px;border-top:1px solid #c4c4c4;box-sizing:border-box;background:#fafafa"></div>
<div style="left:7px;top:496px;width:696px;height:12px;background:#eeeeee;border-bottom:1px solid #a9a9a9;border-right:1px solid #a9a9a9;border-top:1px solid #f6f6f6;border-left:1px solid #f6f6f6;box-sizing:border-box"></div>
</body></html>
